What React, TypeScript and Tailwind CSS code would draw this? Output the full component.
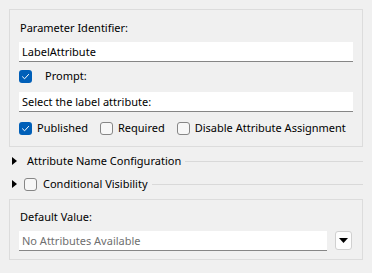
import React from 'react';

const font = "font-['Noto_Sans','Liberation_Sans',sans-serif]";

const Check = ({ checked }: { checked?: boolean }) =>
  checked ? (
    <span className="flex h-[13px] w-[13px] shrink-0 items-center justify-center rounded-[3px] bg-[#005fb8]">
      <svg width="9" height="9" viewBox="0 0 9 9" fill="none">
        <path d="M1.5 4.8 L3.6 6.8 L7.6 2.4" stroke="white" strokeWidth="1" strokeLinecap="round" strokeLinejoin="round" />
      </svg>
    </span>
  ) : (
    <span className="block h-[13px] w-[13px] shrink-0 rounded-[3px] border border-[#868686] bg-[#f7f7f7]" />
  );

const Triangle = () => (
  <svg width="5" height="8" viewBox="0 0 5 8" className="shrink-0">
    <path d="M0 0 L5 4 L0 8 Z" fill="black" />
  </svg>
);

const TextBox = ({ value, placeholder, className = '' }: { value?: string; placeholder?: string; className?: string }) => (
  <div className={`flex h-[20px] items-center border-b border-[#868686] bg-white pl-[3px] ${className}`}>
    {value ? <span className="text-black">{value}</span> : <span className="text-[#6f6f6f]">{placeholder}</span>}
  </div>
);

const App: React.FC = () => {
  return (
    <div className={`flex h-[273px] w-[372px] flex-col whitespace-nowrap bg-[#f0f0f0] px-[9px] pt-[9px] text-[11px] leading-[16px] text-black ${font}`}>
      <div className="flex flex-col border border-[#dcdcdc] px-[9px] pb-[8px] pt-[8px]">
        <div className="flex h-[20px] items-center pl-[1px]">Parameter Identifier:</div>
        <TextBox value="LabelAttribute" className="mt-[4px]" />
        <div className="mt-[4px] flex h-[20px] items-center">
          <Check checked />
          <span className="ml-[13px]">Prompt:</span>
        </div>
        <TextBox value="Select the label attribute:" className="mt-[6px]" />
        <div className="mt-[6px] flex h-[20px] items-center">
          <Check checked />
          <span className="ml-[5px]">Published</span>
          <span className="ml-[12px] flex items-center">
            <Check />
            <span className="ml-[5px]">Required</span>
          </span>
          <span className="ml-[12px] flex items-center">
            <Check />
            <span className="ml-[5px]">Disable Attribute Assignment</span>
          </span>
        </div>
      </div>

      <div className="mt-[4px] flex h-[20px] items-center pl-[3px]">
        <Triangle />
        <span className="ml-[10px]">Attribute Name Configuration</span>
        <div className="ml-[4px] h-px flex-1 bg-[#d9d9d9]" />
      </div>
      <div className="mt-[3px] flex h-[20px] items-center pl-[3px]">
        <Triangle />
        <span className="ml-[7px] flex">
          <Check />
        </span>
        <span className="ml-[6px]">Conditional Visibility</span>
        <div className="ml-[4px] h-px flex-1 bg-[#d9d9d9]" />
      </div>

      <div className="mt-[5px] flex flex-col border border-[#dcdcdc] pb-[8px] pl-[9px] pr-[10px] pt-[7px]">
        <div className="flex h-[20px] items-center pl-[1px]">Default Value:</div>
        <div className="mt-[4px] flex items-start">
          <TextBox placeholder="No Attributes Available" className="flex-1" />
          <div className="ml-[8px] flex h-[19px] w-[17px] items-center justify-center rounded-[3px] border border-[#d0d0d0] bg-[#fdfdfd]">
            <svg width="9" height="5" viewBox="0 0 9 5">
              <path d="M0 0 L9 0 L4.5 5 Z" fill="black" />
            </svg>
          </div>
        </div>
      </div>
    </div>
  );
};

export default App;
